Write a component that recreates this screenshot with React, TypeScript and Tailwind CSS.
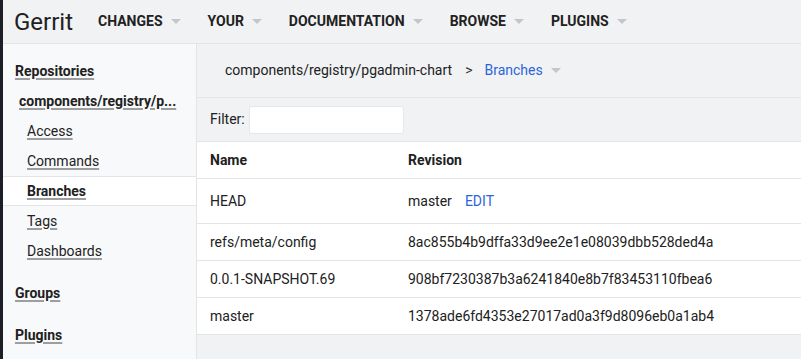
import React from 'react';

const navItems = ['CHANGES', 'YOUR', 'DOCUMENTATION', 'BROWSE', 'PLUGINS'];

const branches = [
  { name: 'HEAD', revision: 'master', edit: true },
  { name: 'refs/meta/config', revision: '8ac855b4b9dffa33d9ee2e1e08039dbb528ded4a' },
  { name: '0.0.1-SNAPSHOT.69', revision: '908bf7230387b3a6241840e8b7f83453110fbea6' },
  { name: 'master', revision: '1378ade6fd4353e27017ad0a3f9d8096eb0a1ab4' },
];

const Caret = () => (
  <span className="inline-block w-0 h-0 border-l-[5px] border-r-[5px] border-t-[5px] border-l-transparent border-r-transparent border-t-[#c4c6c9]" />
);

const linkCls = 'underline decoration-[#9e9e9e] decoration-[2px] underline-offset-[2px]';

const App: React.FC = () => {
  return (
    <div
      className="flex w-[801px] h-[359px] overflow-hidden bg-[#f1f2f4] text-[#212121]"
      style={{ fontFamily: 'Roboto, "Liberation Sans", sans-serif' }}
    >
      {/* dark edge from the window behind */}
      <div className="w-[3px] shrink-0 bg-[#1c2026]" />

      <div className="flex flex-col flex-1 min-w-0">
        {/* Header */}
        <header className="flex items-center h-[44px] shrink-0 border-b border-[#e3e4e6] bg-[#f1f2f4]">
          <span className="ml-[11px] text-[24px] leading-none">Gerrit</span>
          <nav className="flex items-center ml-[25px] gap-[27px]">
            {navItems.map((item) => (
              <div key={item} className="flex items-center gap-[8px] text-[14px] font-bold">
                <span>{item}</span>
                <Caret />
              </div>
            ))}
          </nav>
        </header>

        <div className="flex flex-1 min-h-0">
          {/* Sidebar */}
          <aside className="w-[194px] shrink-0 bg-[#f8f9fa] border-r border-[#e3e4e6] pt-[12px] text-[14px]">
            <div className="h-[30px] flex items-center pl-[12px] font-bold">
              <span className={linkCls}>Repositories</span>
            </div>
            <div className="h-[30px] flex items-center pl-[16px] font-bold">
              <span className={linkCls}>components/registry/p...</span>
            </div>
            {['Access', 'Commands', 'Branches', 'Tags', 'Dashboards'].map((s) => (
              <div
                key={s}
                className={
                  s === 'Branches'
                    ? 'h-[30px] flex items-center pl-[24px] font-bold bg-white border-y border-[#e3e4e6]'
                    : 'h-[30px] flex items-center pl-[24px]'
                }
              >
                <span className={linkCls}>{s}</span>
              </div>
            ))}
            <div className="h-[42px] flex items-end pb-[4px] pl-[12px] font-bold">
              <span className={linkCls}>Groups</span>
            </div>
            <div className="h-[42px] flex items-end pb-[4px] pl-[12px] font-bold">
              <span className={linkCls}>Plugins</span>
            </div>
          </aside>

          {/* Main */}
          <main className="flex-1 min-w-0 flex flex-col text-[14px]">
            <div className="h-[54px] shrink-0 flex items-center pl-[28px] border-b border-[#e3e4e6]">
              <span>components/registry/pgadmin-chart</span>
              <span className="ml-[13px] text-[#333]">&gt;</span>
              <span className="ml-[12px] text-[#2a66d9]">Branches</span>
              <span className="ml-[8px] flex items-center">
                <Caret />
              </span>
            </div>
            <div className="h-[44px] shrink-0 flex items-center pl-[13px] border-b border-[#e3e4e6]">
              <span>Filter:</span>
              <input
                className="ml-[4px] w-[155px] h-[28px] bg-white rounded-[3px] border border-[#e6e7e9] outline-none"
                type="text"
              />
            </div>
            <div className="bg-white">
              <div className="h-[37px] flex items-center border-b border-[#e3e4e6] font-bold">
                <div className="w-[211px] pl-[13px]">Name</div>
                <div>Revision</div>
              </div>
              {branches.map((b) => (
                <div
                  key={b.name}
                  className={
                    b.edit
                      ? 'h-[45px] flex items-center border-b border-[#e3e4e6]'
                      : 'h-[37px] flex items-center border-b border-[#e3e4e6]'
                  }
                >
                  <div className="w-[211px] pl-[13px]">{b.name}</div>
                  <div className="flex items-center">
                    <span>{b.revision}</span>
                    {b.edit && <span className="ml-[13px] text-[#2a66d9]">EDIT</span>}
                  </div>
                </div>
              ))}
            </div>
          </main>
        </div>
      </div>
    </div>
  );
};

export default App;
